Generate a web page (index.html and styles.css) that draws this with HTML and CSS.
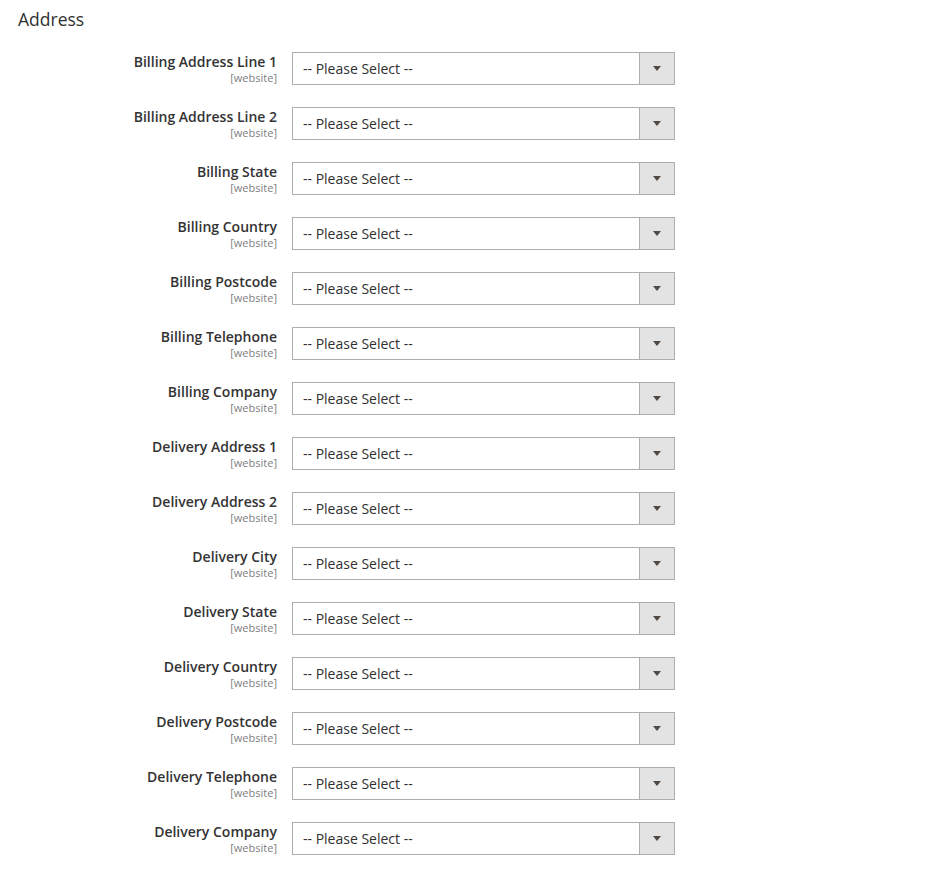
FILE: index.html
```html
<!DOCTYPE html>
<html>
<head>
<meta charset="utf-8">
<link rel="stylesheet" href="styles.css">
</head>
<body>
<div class="section">
  <h2 class="title">Address</h2>
  <div class="rows">
    <div class="row"><div class="label"><span class="name">Billing Address Line 1</span><span class="scope">[website]</span></div><div class="select"><span class="value">-- Please Select --</span><span class="btn"><i class="arrow"></i></span></div></div>
    <div class="row"><div class="label"><span class="name">Billing Address Line 2</span><span class="scope">[website]</span></div><div class="select"><span class="value">-- Please Select --</span><span class="btn"><i class="arrow"></i></span></div></div>
    <div class="row"><div class="label"><span class="name">Billing State</span><span class="scope">[website]</span></div><div class="select"><span class="value">-- Please Select --</span><span class="btn"><i class="arrow"></i></span></div></div>
    <div class="row"><div class="label"><span class="name">Billing Country</span><span class="scope">[website]</span></div><div class="select"><span class="value">-- Please Select --</span><span class="btn"><i class="arrow"></i></span></div></div>
    <div class="row"><div class="label"><span class="name">Billing Postcode</span><span class="scope">[website]</span></div><div class="select"><span class="value">-- Please Select --</span><span class="btn"><i class="arrow"></i></span></div></div>
    <div class="row"><div class="label"><span class="name">Billing Telephone</span><span class="scope">[website]</span></div><div class="select"><span class="value">-- Please Select --</span><span class="btn"><i class="arrow"></i></span></div></div>
    <div class="row"><div class="label"><span class="name">Billing Company</span><span class="scope">[website]</span></div><div class="select"><span class="value">-- Please Select --</span><span class="btn"><i class="arrow"></i></span></div></div>
    <div class="row"><div class="label"><span class="name">Delivery Address 1</span><span class="scope">[website]</span></div><div class="select"><span class="value">-- Please Select --</span><span class="btn"><i class="arrow"></i></span></div></div>
    <div class="row"><div class="label"><span class="name">Delivery Address 2</span><span class="scope">[website]</span></div><div class="select"><span class="value">-- Please Select --</span><span class="btn"><i class="arrow"></i></span></div></div>
    <div class="row"><div class="label"><span class="name">Delivery City</span><span class="scope">[website]</span></div><div class="select"><span class="value">-- Please Select --</span><span class="btn"><i class="arrow"></i></span></div></div>
    <div class="row"><div class="label"><span class="name">Delivery State</span><span class="scope">[website]</span></div><div class="select"><span class="value">-- Please Select --</span><span class="btn"><i class="arrow"></i></span></div></div>
    <div class="row"><div class="label"><span class="name">Delivery Country</span><span class="scope">[website]</span></div><div class="select"><span class="value">-- Please Select --</span><span class="btn"><i class="arrow"></i></span></div></div>
    <div class="row"><div class="label"><span class="name">Delivery Postcode</span><span class="scope">[website]</span></div><div class="select"><span class="value">-- Please Select --</span><span class="btn"><i class="arrow"></i></span></div></div>
    <div class="row"><div class="label"><span class="name">Delivery Telephone</span><span class="scope">[website]</span></div><div class="select"><span class="value">-- Please Select --</span><span class="btn"><i class="arrow"></i></span></div></div>
    <div class="row"><div class="label"><span class="name">Delivery Company</span><span class="scope">[website]</span></div><div class="select"><span class="value">-- Please Select --</span><span class="btn"><i class="arrow"></i></span></div></div>
  </div>
</div>
</body>
</html>
```

FILE: styles.css
```css
html, body {
  margin: 0;
  padding: 0;
  background: #ffffff;
  font-family: "Open Sans", "Liberation Sans", sans-serif;
  color: #303030;
}
.section {
  padding: 8px 0 0 18px;
}
.title {
  margin: 0;
  font-size: 17.5px;
  font-weight: 400;
  line-height: 22px;
  color: #303030;
}
.rows {
  display: flex;
  flex-direction: column;
  gap: 22px;
  margin-top: 22px;
}
.row {
  display: flex;
  align-items: flex-start;
  gap: 15px;
}
.label {
  width: 259px;
  display: flex;
  flex-direction: column;
  align-items: flex-end;
  padding-top: 1px;
}
.name {
  font-size: 14px;
  font-weight: 600;
  line-height: 17.5px;
  color: #333333;
}
.scope {
  font-size: 11px;
  line-height: 13px;
  color: #808080;
}
.select {
  width: 383px;
  height: 33px;
  box-sizing: border-box;
  border: 1px solid #adadad;
  display: flex;
  align-items: stretch;
  background: #ffffff;
}
.value {
  flex: 1;
  padding-left: 10px;
  font-size: 14px;
  line-height: 31px;
  color: #303030;
}
.btn {
  width: 34px;
  border-left: 1px solid #adadad;
  background: #e3e3e3;
  display: flex;
  align-items: center;
  justify-content: center;
}
.arrow {
  width: 0;
  height: 0;
  border-left: 4px solid transparent;
  border-right: 4px solid transparent;
  border-top: 5px solid #514943;
  margin-left: -1px;
}
```
